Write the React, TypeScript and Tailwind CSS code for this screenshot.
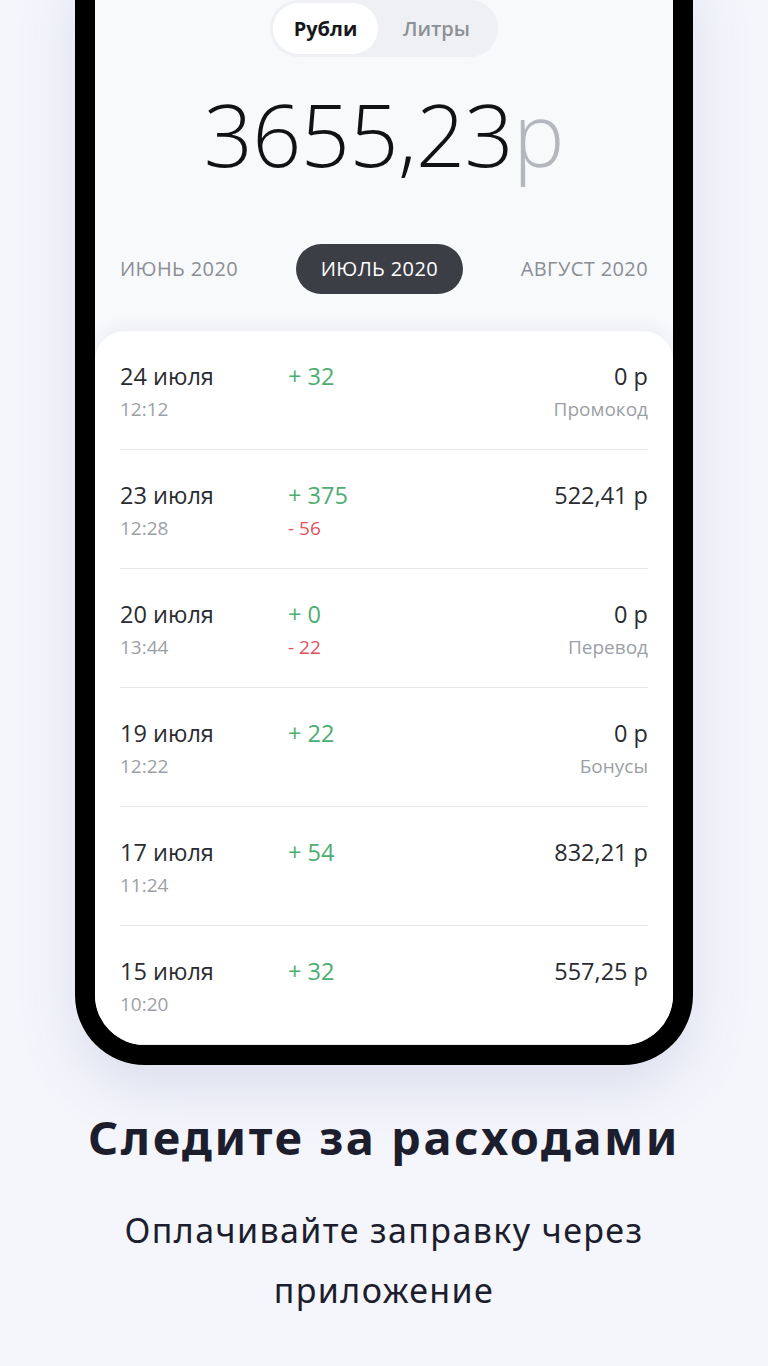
import React from 'react';

// Строки истории операций
interface Operation {
    date: string;
    time: string;
    plus: string;
    minus?: string;
    amount: string;
    note?: string;
}

const operations: Operation[] = [
    { date: '24 июля', time: '12:12', plus: '+ 32', amount: '0 р', note: 'Промокод' },
    { date: '23 июля', time: '12:28', plus: '+ 375', minus: '- 56', amount: '522,41 р' },
    { date: '20 июля', time: '13:44', plus: '+ 0', minus: '- 22', amount: '0 р', note: 'Перевод' },
    { date: '19 июля', time: '12:22', plus: '+ 22', amount: '0 р', note: 'Бонусы' },
    { date: '17 июля', time: '11:24', plus: '+ 54', amount: '832,21 р' },
    { date: '15 июля', time: '10:20', plus: '+ 32', amount: '557,25 р' },
];

const months = ['ИЮНЬ 2020', 'ИЮЛЬ 2020', 'АВГУСТ 2020'];

const App: React.FC = () => {
    return (
        <main
            className="w-[768px] h-[1366px] overflow-hidden bg-[#f5f6fc] flex flex-col items-center"
            style={{ fontFamily: '"Open Sans", "Noto Sans", sans-serif' }}
        >
            {/* Телефон */}
            <div className="-mt-[40px] w-[618px] h-[1105px] shrink-0 bg-black rounded-b-[70px] p-[20px] shadow-[0_24px_60px_rgba(70,80,150,0.14)]">
                <div className="w-full h-full bg-[#f8f9fb] rounded-b-[50px] overflow-hidden flex flex-col">
                    <div className="pt-[20px] flex justify-center">
                        <div className="w-[228px] h-[57px] rounded-full bg-[#eef0f3] p-[3px] flex items-center">
                            <div className="w-[105px] h-[51px] rounded-full bg-white flex items-center justify-center text-[20px] font-bold text-[#16171b]">
                                Рубли
                            </div>
                            <div className="flex-1 flex items-center justify-center text-[20px] font-semibold text-[#8d9097]">
                                Литры
                            </div>
                        </div>
                    </div>

                    <div className="mt-[22px] h-[110px] flex justify-center items-center">
                        <span className="text-[86px] font-light leading-none text-[#111214] tracking-[-0.5px]">3655,23</span>
                        <span className="text-[86px] font-light leading-none text-[#b4b7be]">р</span>
                    </div>

                    <div className="mt-[56px] px-[25px] flex items-center justify-between">
                        {months.map((m, i) =>
                            i === 1 ? (
                                <div key={m} className="h-[50px] px-[25px] rounded-full bg-[#3b3e45] text-white text-[20px] tracking-[0.4px] flex items-center">
                                    {m}
                                </div>
                            ) : (
                                <div key={m} className="text-[20px] tracking-[0.4px] text-[#8b8e95]">
                                    {m}
                                </div>
                            )
                        )}
                    </div>

                    {/* Карточка с операциями */}
                    <div className="mt-[37px] flex-1 bg-white rounded-t-[30px] px-[25px] shadow-[0_-6px_16px_rgba(80,90,140,0.06)]">
                        {operations.map((op) => (
                            <div key={op.date} className="pt-[31px] pb-[29px] border-b border-[#e6e7ea] flex">
                                <div className="w-[168px] flex flex-col gap-[8px]">
                                    <span className="text-[23.5px] leading-[28px] text-[#2a2c31]">{op.date}</span>
                                    <span className="text-[19px] leading-[22px] text-[#9c9fa6]">{op.time}</span>
                                </div>
                                <div className="flex flex-col gap-[8px]">
                                    <span className="text-[23.5px] leading-[28px] text-[#4cae72]">{op.plus}</span>
                                    <span className="text-[19px] leading-[22px] text-[#e0525b]">{op.minus}</span>
                                </div>
                                <div className="ml-auto flex flex-col items-end gap-[8px]">
                                    <span className="text-[23.5px] leading-[28px] text-[#2a2c31]">{op.amount}</span>
                                    <span className="text-[19px] leading-[22px] text-[#9c9fa6]">{op.note}</span>
                                </div>
                            </div>
                        ))}
                    </div>
                </div>
            </div>

            <h1
                className="mt-[45px] text-[47px] leading-[55px] font-bold tracking-[2.5px] text-[#1c1e2d] text-center whitespace-nowrap"
                style={{ fontFamily: '"Noto Sans", sans-serif' }}
            >
                Следите за расходами
            </h1>
            <p
                className="mt-[35px] w-[600px] text-[34px] leading-[60px] tracking-[1.4px] text-[#1c1e2d] text-center"
                style={{ fontFamily: '"Noto Sans", sans-serif' }}
            >
                Оплачивайте заправку через приложение
            </p>
        </main>
    );
};

export default App;
